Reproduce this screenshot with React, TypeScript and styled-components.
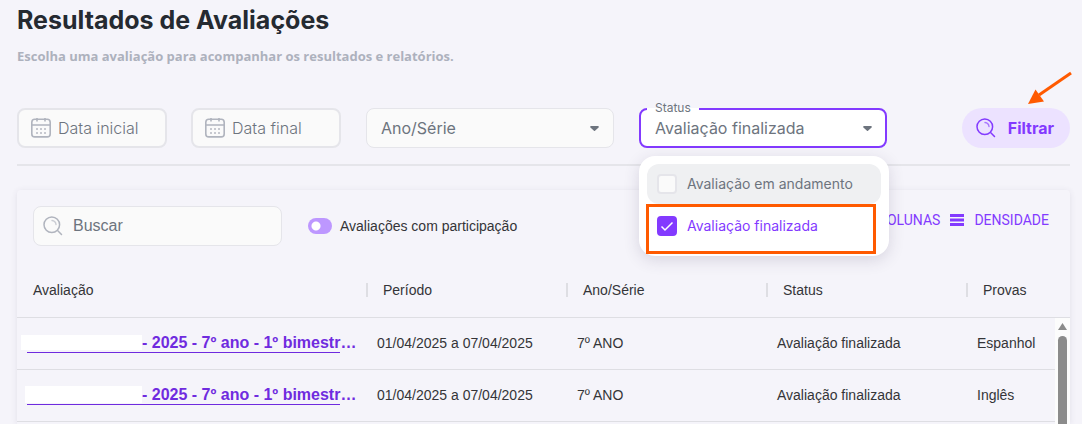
import React from "react";
import styled, { createGlobalStyle } from "styled-components";

const color = {
  page: "#f5f4fa",
  ink: "#252a31",
  text: "#343438",
  muted: "#6d747e",
  faint: "#adb1bd",
  field: "#fafafa",
  line: "#e5e5ea",
  rule: "#dedee3",
  brand: "#833aff",
  link: "#6f2bdf",
  brandSoft: "#ece2ff",
  mark: "#ff5a00",
};

const display = `Inter, Roboto, "Liberation Sans", sans-serif`;
const narrow = `Roboto, "Liberation Sans", sans-serif`;
const body = `"Liberation Sans", Arial, sans-serif`;

const GlobalStyle = createGlobalStyle`
  * { box-sizing: border-box; }
  body {
    margin: 0;
    background: ${color.page};
    color: ${color.text};
    font-family: ${body};
    font-size: 14px;
  }
  button, input, select { font-family: inherit; margin: 0; }
`;

const Page = styled.main`
  display: flex;
  flex-direction: column;
  height: 100vh;
  overflow: hidden;
  padding: 0 12px 0 17px;
`;

const Title = styled.h1`
  margin: 4px 0 0;
  font: 700 25px/32px ${display};
  color: ${color.ink};
`;

const Subtitle = styled.p`
  margin: 10px 0 0;
  font: 700 13px/20px "Open Sans", ${display};
  color: ${color.faint};
`;

const Filters = styled.form`
  display: flex;
  align-items: center;
  gap: 25px;
  margin-top: 42px;
  padding-bottom: 16px;
  border-bottom: 2px solid ${color.line};
`;

const Dates = styled.div`
  display: flex;
  gap: 24px;
`;

const Field = styled.label<{ $width: number; $thick?: boolean; $gap: number; $pad: number }>`
  display: flex;
  align-items: center;
  gap: ${(p) => p.$gap}px;
  width: ${(p) => p.$width}px;
  height: 40px;
  padding: 0 ${(p) => p.$pad}px;
  background: ${color.field};
  border: ${(p) => (p.$thick ? 2 : 1)}px solid ${color.line};
  border-radius: 8px;
`;

const Entry = styled.input<{ $light?: boolean }>`
  flex: 1;
  min-width: 0;
  padding: 0;
  border: 0;
  outline: 0;
  background: none;
  font-family: ${(p) => (p.$light ? display : body)};
  font-weight: ${(p) => (p.$light ? 300 : 400)};
  font-size: 16px;
  line-height: 20px;
  &::placeholder {
    color: ${color.muted};
    opacity: 1;
  }
`;

const SelectBox = styled.div`
  position: relative;
  width: 248px;
`;

const Select = styled.select<{ $open?: boolean }>`
  appearance: none;
  display: block;
  width: 100%;
  height: 40px;
  padding: 0 32px 0 14px;
  border: ${(p) => (p.$open ? `2px solid ${color.brand}` : `1px solid ${color.line}`)};
  border-radius: 8px;
  outline: 0;
  background: ${(p) => (p.$open ? "#ffffff" : color.field)};
  color: ${color.muted};
  font: 400 16px/20px ${display};
`;

const Caret = styled.svg`
  position: absolute;
  right: 15px;
  top: 18px;
  pointer-events: none;
`;

const FloatLabel = styled.label`
  position: absolute;
  left: 8px;
  top: -8px;
  padding: 0 8px;
  background: linear-gradient(${color.page} 50%, #ffffff 50%);
  color: ${color.muted};
  font: 400 12px/16px ${display};
`;

const Menu = styled.div`
  position: absolute;
  z-index: 2;
  top: 48px;
  left: 0;
  display: flex;
  flex-direction: column;
  gap: 2px;
  width: 250px;
  padding: 8px 8px 10px;
  border-radius: 16px;
  background: #ffffff;
  box-shadow: 0 4px 16px rgba(60, 50, 90, 0.16);
`;

const Option = styled.label<{ $on?: boolean }>`
  display: flex;
  align-items: center;
  gap: 10px;
  height: 40px;
  padding: 0 10px;
  border-radius: 12px;
  background: ${(p) => (p.$on ? "#ffffff" : "#eff0f2")};
  color: ${(p) => (p.$on ? color.brand : color.muted)};
  font: 400 14px/20px ${display};
`;

const TickBox = styled.span`
  display: grid;
  width: 20px;
  height: 20px;
  > * { grid-area: 1 / 1; }
  svg { pointer-events: none; }
`;

const Tick = styled.input`
  appearance: none;
  width: 20px;
  height: 20px;
  border: 2px solid ${color.line};
  border-radius: 4px;
  background: ${color.field};
  &:checked {
    border-color: ${color.brand};
    background: ${color.brand};
  }
`;

const Highlight = styled.div`
  position: absolute;
  top: 48px;
  left: 7px;
  width: 230px;
  height: 50px;
  border: 3px solid ${color.mark};
  pointer-events: none;
`;

const FilterSlot = styled.div`
  position: relative;
  margin-left: auto;
`;

const FilterButton = styled.button`
  display: flex;
  align-items: center;
  gap: 12px;
  height: 40px;
  padding: 0 16px 0 14px;
  border: 0;
  border-radius: 20px;
  background: ${color.brandSoft};
  color: ${color.brand};
  font: 700 16px/20px ${display};
`;

const Pointer = styled.svg`
  position: absolute;
  right: -2px;
  top: -37px;
  pointer-events: none;
`;

const Panel = styled.section`
  flex: 1;
  display: flex;
  flex-direction: column;
  min-height: 0;
  margin-top: 24px;
  border-radius: 4px 4px 0 0;
  box-shadow: 0 1px 6px rgba(60, 50, 90, 0.1);
`;

const Toolbar = styled.div`
  display: flex;
  align-items: center;
  padding: 16px;
`;

const SwitchLabel = styled.label`
  display: flex;
  align-items: center;
  gap: 8px;
  margin-left: 26px;
  line-height: 20px;
`;

const Switch = styled.input`
  appearance: none;
  width: 24px;
  height: 16px;
  border-radius: 8px;
  background: radial-gradient(circle at 8px 8px, #ffffff 4px, #bd97ff 5px);
`;

const Tools = styled.div`
  display: flex;
  align-self: flex-start;
  margin-left: auto;
`;

const ToolButton = styled.button`
  display: flex;
  align-items: center;
  gap: 10px;
  height: 28px;
  padding: 0 5px;
  border: 0;
  background: none;
  color: ${color.brand};
  font: 400 14px/20px ${narrow};
`;

const TableArea = styled.div`
  position: relative;
  flex: 1;
  min-height: 0;
  overflow: hidden;
`;

const Table = styled.table`
  width: 100%;
  table-layout: fixed;
  border-collapse: separate;
  border-spacing: 0;
`;

const Head = styled.th<{ $width?: number }>`
  width: ${(p) => (p.$width ? `${p.$width}px` : "auto")};
  height: 56px;
  padding: 0;
  border-bottom: 1px solid ${color.rule};
  text-align: left;
  font-weight: 400;
  line-height: 14px;
  span {
    display: block;
    padding-left: 16px;
  }
  th + & span {
    margin-left: -1px;
    padding-left: 15px;
    border-left: 2px solid ${color.rule};
  }
`;

const Cell = styled.td`
  height: 52px;
  padding: 0 10px 2px;
  border-bottom: 1px solid ${color.rule};
  line-height: 20px;
  white-space: nowrap;
`;

const NameLine = styled.div`
  display: flex;
  color: ${color.link};
  font-size: 16px;
  font-weight: 700;
`;

const NameLink = styled.a`
  display: flex;
  align-items: center;
  height: 20px;
  padding-top: 1px;
  border-bottom: 1px solid ${color.link};
  color: inherit;
  text-decoration: none;
`;

const Blank = styled.span<{ $lead: number; $height: number }>`
  width: ${(p) => p.$lead + 115}px;
  height: ${(p) => p.$height}px;
  margin-left: ${(p) => -p.$lead}px;
  background: #ffffff;
`;

const ScrollRail = styled.div`
  position: absolute;
  top: 56px;
  right: 0;
  bottom: 0;
  width: 15px;
  padding: 5px 3px 0;
  background: #fcfcfc;
  svg { display: block; }
`;

const ScrollThumb = styled.div`
  height: 100%;
  margin-top: 5px;
  border-radius: 5px;
  background: #8b8b8b;
`;

const CalendarIcon = () => (
  <svg width="20" height="20" viewBox="0 0 20 20" fill="none" stroke="#b0b4be" strokeWidth="1.6">
    <rect x="0.8" y="1.3" width="18.4" height="17.6" rx="3" />
    <path d="M1 7h18M6 0v3.500M14 0v3.500" />
    <path d="M5 11h2M9 11h2M13 11h2M5 15h2M9 15h2M13 15h2" strokeWidth="2" opacity=".7" />
  </svg>
);

const SearchIcon = ({ stroke }: { stroke: string }) => (
  <svg width="20" height="20" viewBox="0 0 20 20" fill="none" stroke={stroke} strokeWidth="1.500" strokeLinecap="round">
    <circle cx="8.800" cy="8.800" r="7.800" />
    <path d="M14.800 14.800l3.700 3.700" />
    <path d="M9 4.500a4.500 4.500 0 0 1 4 4" strokeWidth="1.400" opacity=".65" />
  </svg>
);

const CaretIcon = () => (
  <Caret width="9" height="5" viewBox="0 0 9 5" fill={color.muted}>
    <path d="M1 0h7a.9.9 0 0 1 .6 1.500L5.300 4.600a1.100 1.100 0 0 1-1.600 0L.4 1.500A.9.9 0 0 1 1 0z" />
  </Caret>
);

const rows = [
  { lead: 6, height: 15, exam: "Espanhol" },
  { lead: 2, height: 17, exam: "Inglês" },
];

export default function App() {
  return (
    <>
      <GlobalStyle />
      <Page>
        <Title>Resultados de Avaliações</Title>
        <Subtitle>Escolha uma avaliação para acompanhar os resultados e relatórios.</Subtitle>

        <Filters onSubmit={(e) => e.preventDefault()}>
          <Dates>
            {["Data inicial", "Data final"].map((name) => (
              <Field key={name} $width={150} $thick $gap={7} $pad={12}>
                <CalendarIcon />
                <Entry $light type="text" placeholder={name} aria-label={name} />
              </Field>
            ))}
          </Dates>
          <SelectBox>
            <Select aria-label="Ano/Série">
              <option>Ano/Série</option>
            </Select>
            <CaretIcon />
          </SelectBox>
          <SelectBox>
            <Select id="status" $open>
              <option>Avaliação finalizada</option>
            </Select>
            <FloatLabel htmlFor="status">Status</FloatLabel>
            <CaretIcon />
            <Menu>
              <Option>
                <TickBox>
                  <Tick type="checkbox" />
                </TickBox>
                Avaliação em andamento
              </Option>
              <Option $on>
                <TickBox>
                  <Tick type="checkbox" defaultChecked />
                  <svg width="20" height="20" viewBox="0 0 20 20" fill="none" stroke="#fff" strokeWidth="1.500">
                    <path d="M4.500 10.500l3.500 3.500 7.500-7.500" />
                  </svg>
                </TickBox>
                Avaliação finalizada
              </Option>
              <Highlight />
            </Menu>
          </SelectBox>
          <FilterSlot>
            <FilterButton type="submit">
              <SearchIcon stroke={color.brand} />
              Filtrar
            </FilterButton>
            <Pointer width="46" height="36" viewBox="0 0 46 36">
              <path d="M45 2L13 24" stroke={color.mark} strokeWidth="3" />
              <path d="M2 33L9.500 18.500L18 30.500z" fill={color.mark} />
            </Pointer>
          </FilterSlot>
        </Filters>

        <Panel>
          <Toolbar>
            <Field $width={249} $gap={10} $pad={9}>
              <SearchIcon stroke="#b0b4be" />
              <Entry type="text" placeholder="Buscar" aria-label="Buscar" />
            </Field>
            <SwitchLabel>
              <Switch type="checkbox" role="switch" />
              Avaliações com participação
            </SwitchLabel>
            <Tools>
              <ToolButton type="button">
                <svg width="14" height="12" viewBox="0 0 14 12" fill={color.brand}>
                  <path d="M0 0h4v12H0zM5 0h4v12H5zM10 0h4v12h-4z" />
                </svg>
                COLUNAS
              </ToolButton>
              <ToolButton type="button">
                <svg width="14" height="12" viewBox="0 0 14 12" fill={color.brand}>
                  <path d="M0 0h14v3H0zM0 4.500h14v3H0zM0 9h14v3H0z" />
                </svg>
                DENSIDADE
              </ToolButton>
            </Tools>
          </Toolbar>

          <TableArea>
            <Table>
              <thead>
                <tr>
                  <Head $width={350}><span>Avaliação</span></Head>
                  <Head $width={200}><span>Período</span></Head>
                  <Head $width={200}><span>Ano/Série</span></Head>
                  <Head $width={200}><span>Status</span></Head>
                  <Head><span>Provas</span></Head>
                </tr>
              </thead>
              <tbody>
                {rows.map((row) => (
                  <tr key={row.exam}>
                    <Cell>
                      <NameLine>
                        <NameLink href="#">
                          <Blank $lead={row.lead} $height={row.height} />
                          - 2025 - 7º ano - 1º bimestr
                        </NameLink>
                        …
                      </NameLine>
                    </Cell>
                    <Cell>01/04/2025 a 07/04/2025</Cell>
                    <Cell>7º ANO</Cell>
                    <Cell>Avaliação finalizada</Cell>
                    <Cell>{row.exam}</Cell>
                  </tr>
                ))}
              </tbody>
            </Table>
            <ScrollRail>
              <svg width="9" height="8" viewBox="0 0 9 8" fill="#8b8b8b">
                <path d="M4.500 0L9 7H0z" />
              </svg>
              <ScrollThumb />
            </ScrollRail>
          </TableArea>
        </Panel>
      </Page>
    </>
  );
}
